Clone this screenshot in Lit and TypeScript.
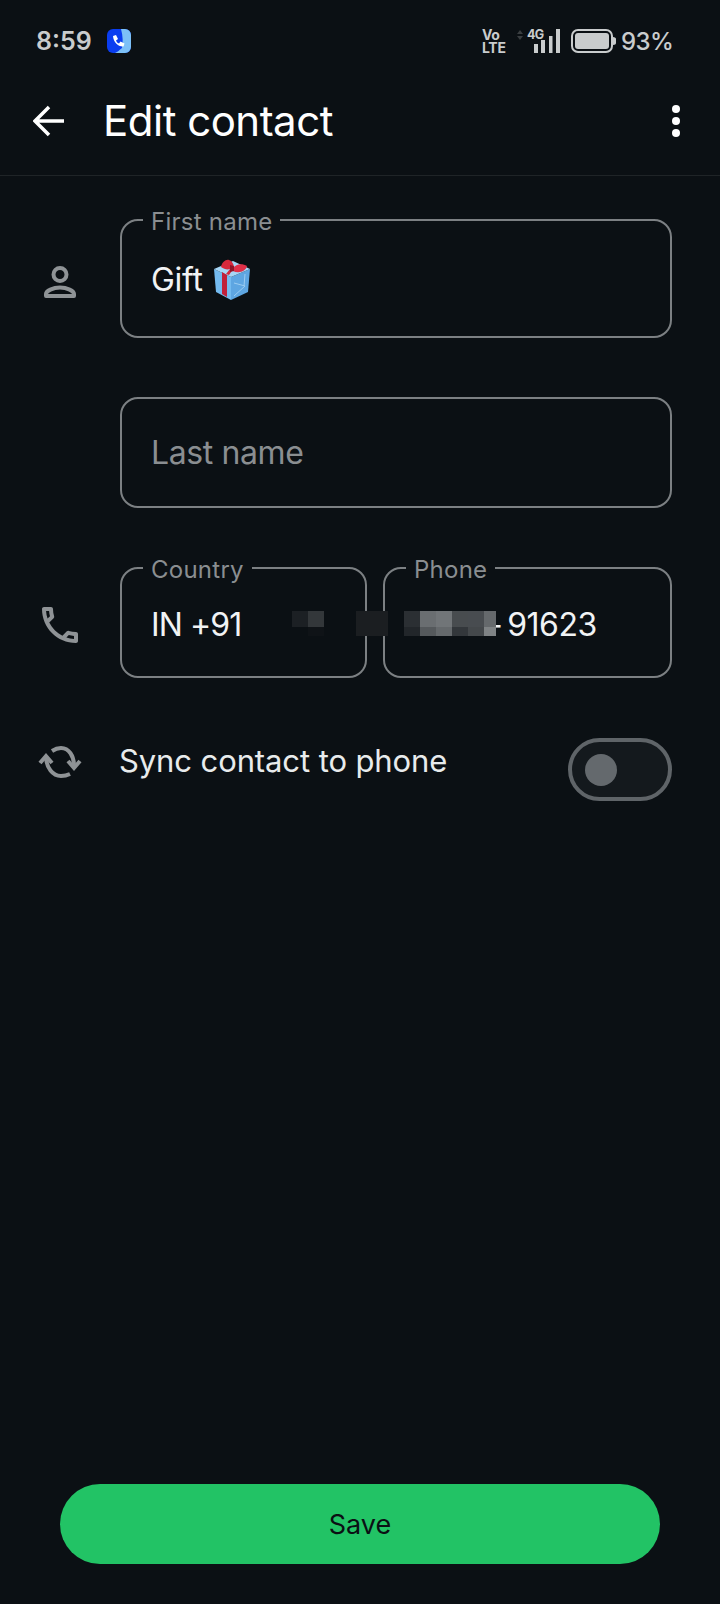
import { LitElement, html, css, svg } from 'lit';
import { customElement } from 'lit/decorators.js';

// blur blocks laid over the phone number: x, y, w, h, colour
const MOSAIC: [number, number, number, number, string][] = [
  [172, 44, 16, 16, '#1c2024'],
  [188, 44, 16, 16, '#33373a'],
  [188, 60, 16, 9, '#0f1317'],
  [236, 44, 32, 25, '#1b1e21'],
  [284, 44, 16, 16, '#2b2f33'],
  [300, 44, 16, 16, '#6a6e71'],
  [316, 44, 16, 16, '#717578'],
  [332, 44, 16, 16, '#484c4f'],
  [348, 44, 16, 16, '#484c50'],
  [364, 44, 12, 16, '#65696c'],
  [284, 60, 16, 9, '#22262a'],
  [300, 60, 16, 9, '#55595c'],
  [316, 60, 16, 9, '#65696c'],
  [332, 60, 16, 9, '#33373b'],
  [348, 60, 16, 9, '#44484b'],
  [364, 60, 12, 9, '#7f8385'],
];

const callIcon = svg`<path fill="currentColor" d="M6.54 5c.06.89.21 1.76.45 2.59l-1.2 1.2c-.41-1.2-.67-2.47-.76-3.79h1.51m9.86 12.02c.85.24 1.72.39 2.6.45v1.49c-1.32-.09-2.59-.35-3.8-.75l1.2-1.19M7.5 3H4c-.55 0-1 .45-1 1 0 9.39 7.61 17 17 17 .55 0 1-.45 1-1v-3.49c0-.55-.45-1-1-1-1.24 0-2.45-.2-3.57-.57-.1-.04-.21-.05-.31-.05-.26 0-.51.1-.71.29l-2.2 2.2c-2.83-1.45-5.15-3.76-6.59-6.59l2.2-2.2c.28-.28.36-.67.25-1.02C8.7 6.45 8.5 5.25 8.5 4c0-.55-.45-1-1-1z"/>`;

@customElement('app-root')
export class AppRoot extends LitElement {
  static styles = css`
    :host {
      display: flex;
      flex-direction: column;
      height: 1604px;
      background: #0b1014;
      color: #f1f3f4;
      font-family: Inter, 'Noto Sans', sans-serif;
    }
    svg {
      display: block;
      flex: none;
    }

    .status {
      display: flex;
      align-items: center;
      height: 82px;
      padding: 0 49px 0 36px;
      color: #c9cccd;
    }
    .time {
      font-size: 25px;
      font-weight: 600;
      width: 71px;
    }
    .status-right {
      margin-left: auto;
      display: flex;
      align-items: center;
    }
    .volte {
      width: 35px;
      font-size: 14px;
      line-height: 13px;
      font-weight: 700;
      letter-spacing: -0.3px;
    }
    .net {
      position: relative;
      width: 42px;
      height: 24px;
      margin-right: 12px;
    }
    .net-bars {
      position: absolute;
      left: 0;
      top: 0;
    }
    .net-label {
      position: absolute;
      left: 10px;
      top: 0;
      font-size: 12.5px;
      line-height: 12px;
      font-weight: 700;
      letter-spacing: -0.6px;
    }
    .pct {
      width: 50px;
      margin-left: 5px;
      font-size: 24px;
      font-weight: 500;
      letter-spacing: -0.6px;
      white-space: nowrap;
    }

    .appbar {
      display: flex;
      align-items: center;
      box-sizing: border-box;
      height: 94px;
      padding: 0 40px 16px 33px;
      border-bottom: 1px solid #1f2427;
      color: #fff;
    }
    .title {
      margin-left: 38px;
      font-size: 42px;
      font-weight: 400;
      letter-spacing: -0.5px;
      flex: 1;
    }

    .form {
      flex: 1;
      display: flex;
      flex-direction: column;
      gap: 59px;
      padding: 43px 48px 0 0;
    }
    .row {
      position: relative;
      display: flex;
      align-items: center;
    }
    .slot {
      width: 120px;
      flex: none;
      display: flex;
      justify-content: center;
      color: #8f9396;
    }
    .slot-person {
      padding-top: 6px;
    }
    .slot-phone {
      padding-top: 4px;
    }
    .fields {
      flex: 1;
      display: flex;
      gap: 16px;
    }
    .field {
      position: relative;
      box-sizing: border-box;
      display: flex;
      align-items: center;
      height: 111px;
      padding: 0 29px;
      border: 2px solid #7c8083;
      border-radius: 18px;
      font-size: 32px;
      letter-spacing: -0.3px;
    }
    .field-tall {
      flex: 1;
      height: 119px;
      padding-top: 2px;
    }
    .field-wide {
      flex: 1;
    }
    .field-country {
      width: 247px;
      padding-top: 4px;
      letter-spacing: -0.9px;
    }
    .field-phone {
      flex: 1;
      padding-top: 4px;
      letter-spacing: -0.5px;
    }
    .placeholder {
      color: #8a8e91;
      letter-spacing: -0.4px;
    }
    .label {
      position: absolute;
      left: 21px;
      top: -11px;
      padding: 0 8px;
      background: #0b1014;
      color: #8a8e91;
      font-size: 24px;
      line-height: 24px;
      letter-spacing: 0.25px;
    }
    .gift {
      margin-left: 10px;
    }
    .number {
      margin-left: 74px;
    }
    .dash {
      margin-right: 5px;
    }
    .mosaic {
      position: absolute;
      left: 120px;
      top: 0;
    }
    .block {
      position: absolute;
    }

    .sync {
      display: flex;
      align-items: flex-start;
      margin-top: 1px;
    }
    .sync .slot {
      padding-top: 8px;
    }
    .sync-text {
      flex: 1;
      margin-left: -1px;
      font-size: 31px;
      line-height: 46px;
      letter-spacing: -0.1px;
      color: #e8ebec;
    }
    .toggle {
      box-sizing: border-box;
      width: 104px;
      height: 63px;
      padding: 0 13px;
      display: flex;
      align-items: center;
      background: #14191d;
      border: 4px solid #5f6468;
      border-radius: 32px;
    }
    .thumb {
      width: 32px;
      height: 32px;
      border-radius: 50%;
      background: #64696d;
    }

    .save {
      height: 80px;
      margin: 0 60px 40px;
      display: flex;
      align-items: center;
      justify-content: center;
      background: #22c365;
      border-radius: 40px;
      color: #0b1014;
      font-size: 27px;
      font-weight: 400;
    }
  `;

  render() {
    return html`
      <div class="status">
        <span class="time">8:59</span>
        <svg width="24" height="24" viewBox="0 0 24 24">
          <rect width="24" height="24" rx="6" fill="#0a3df0" />
          <path d="M14 0h4a6 6 0 0 1 6 6v12a6 6 0 0 1-6 6H8c3-1 4-3 7-5 1-5 1-12-1-19z" fill="#7cc0f7" />
          <path d="M6 7l3-1 2 4-2 1.500c.6 1.500 1.500 2.500 3 3l1.500-2 4 2-1 3c-5 .6-10-4-10.500-10.500z" fill="#fff" />
        </svg>
        <div class="status-right">
          <div class="volte">Vo<br />LTE</div>
          <div class="net">
            <svg class="net-bars" width="44" height="24" viewBox="0 0 44 24">
              <path d="M0 5l3-4 3 4zM0 7h6l-3 4z" fill="#3a3e41" />
              <g fill="currentColor">
                <rect x="17" y="15" width="4" height="9" />
                <rect x="24" y="11" width="4" height="13" />
                <rect x="32" y="7" width="3.500" height="17" />
                <rect x="39" y="0" width="4" height="24" />
              </g>
            </svg>
            <span class="net-label">4G</span>
          </div>
          <svg width="45" height="24" viewBox="0 0 45 24">
            <rect x="1" y="1" width="40" height="22" rx="6" fill="none" stroke="currentColor" stroke-width="2" />
            <rect x="4" y="4" width="34" height="16" rx="3" fill="currentColor" />
            <path d="M42 8c2 0 3 1 3 2v4c0 1-1 2-3 2z" fill="currentColor" />
          </svg>
          <span class="pct">93%</span>
        </div>
      </div>

      <div class="appbar">
        <svg width="32" height="32" viewBox="0 0 32 32" fill="none" stroke="currentColor" stroke-width="3.500">
          <path d="M31 16H3M16 2L2 16l14 14" />
        </svg>
        <div class="title">Edit contact</div>
        <svg width="8" height="32" viewBox="0 0 8 32" fill="currentColor">
          <circle cx="4" cy="4" r="4" />
          <circle cx="4" cy="16" r="4" />
          <circle cx="4" cy="28" r="4" />
        </svg>
      </div>

      <div class="form">
        <div class="row">
          <div class="slot slot-person">
            <svg width="32" height="32" viewBox="0 0 32 32" fill="none" stroke="currentColor" stroke-width="4" stroke-linejoin="round">
              <circle cx="16" cy="8.500" r="6.500" />
              <path d="M2 30v-2c0-3 7-6.500 14-6.500s14 3.500 14 6.500v2z" />
            </svg>
          </div>
          <div class="field field-tall">
            <span class="label">First name</span>
            Gift
            <svg class="gift" width="38" height="41" viewBox="0 0 38 41">
              <path d="M1 10l17 8v23L3 33z" fill="#74bbf0" />
              <path d="M18 18l19-8-2 23-17 8z" fill="#5ea6e2" />
              <path d="M1 10L20 2l17 8-19 8z" fill="#a6d6f6" />
              <path d="M21 24l11 3-11 10M32 15l-1 12" fill="none" stroke="#9ccdf2" stroke-width="1" />
              <path d="M9 13l5 3v22l-5-3z" fill="#c2203a" />
              <path d="M8 8c1-5 5-8 8-7 3 1 5 4 5 8l-5 7-3-1 4-5c-3 1-6 0-9-2z" fill="#d8283c" />
              <path d="M20 9c3-4 9-5 14-2-1 5-8 8-14 5z" fill="#e03048" />
              <path d="M17 6l4 1v5l-4 1z" fill="#8f1428" />
            </svg>
          </div>
        </div>

        <div class="row">
          <div class="slot"></div>
          <div class="field field-wide"><span class="placeholder">Last name</span></div>
        </div>

        <div class="row">
          <div class="slot slot-phone">
            <svg width="48" height="48" viewBox="0 0 24 24">${callIcon}</svg>
          </div>
          <div class="fields">
            <div class="field field-country">
              <span class="label">Country</span>
              IN +91
            </div>
            <div class="field field-phone">
              <span class="label">Phone</span>
              <span class="number"><span class="dash">-</span>91623</span>
            </div>
          </div>
          <div class="mosaic">
            ${MOSAIC.map(
              ([x, y, w, h, c]) =>
                html`<div class="block" style="left:${x}px;top:${y}px;width:${w}px;height:${h}px;background:${c}"></div>`,
            )}
          </div>
        </div>

        <div class="sync">
          <div class="slot">
            <svg width="44" height="32" viewBox="0 0 44 32" fill="none" stroke="currentColor" stroke-width="4">
              <path d="M8 10c0 12 7 20 15 20 3 0 6-.600 9-2" />
              <path d="M2 17l6-7 6 7" />
              <path d="M14 5c3-2 6-3 9-3 8 0 13 8 13 18" />
              <path d="M30 15l6 7 6-7" />
            </svg>
          </div>
          <div class="sync-text">Sync contact to phone</div>
          <div class="toggle"><div class="thumb"></div></div>
        </div>
      </div>

      <div class="save">Save</div>
    `;
  }
}
